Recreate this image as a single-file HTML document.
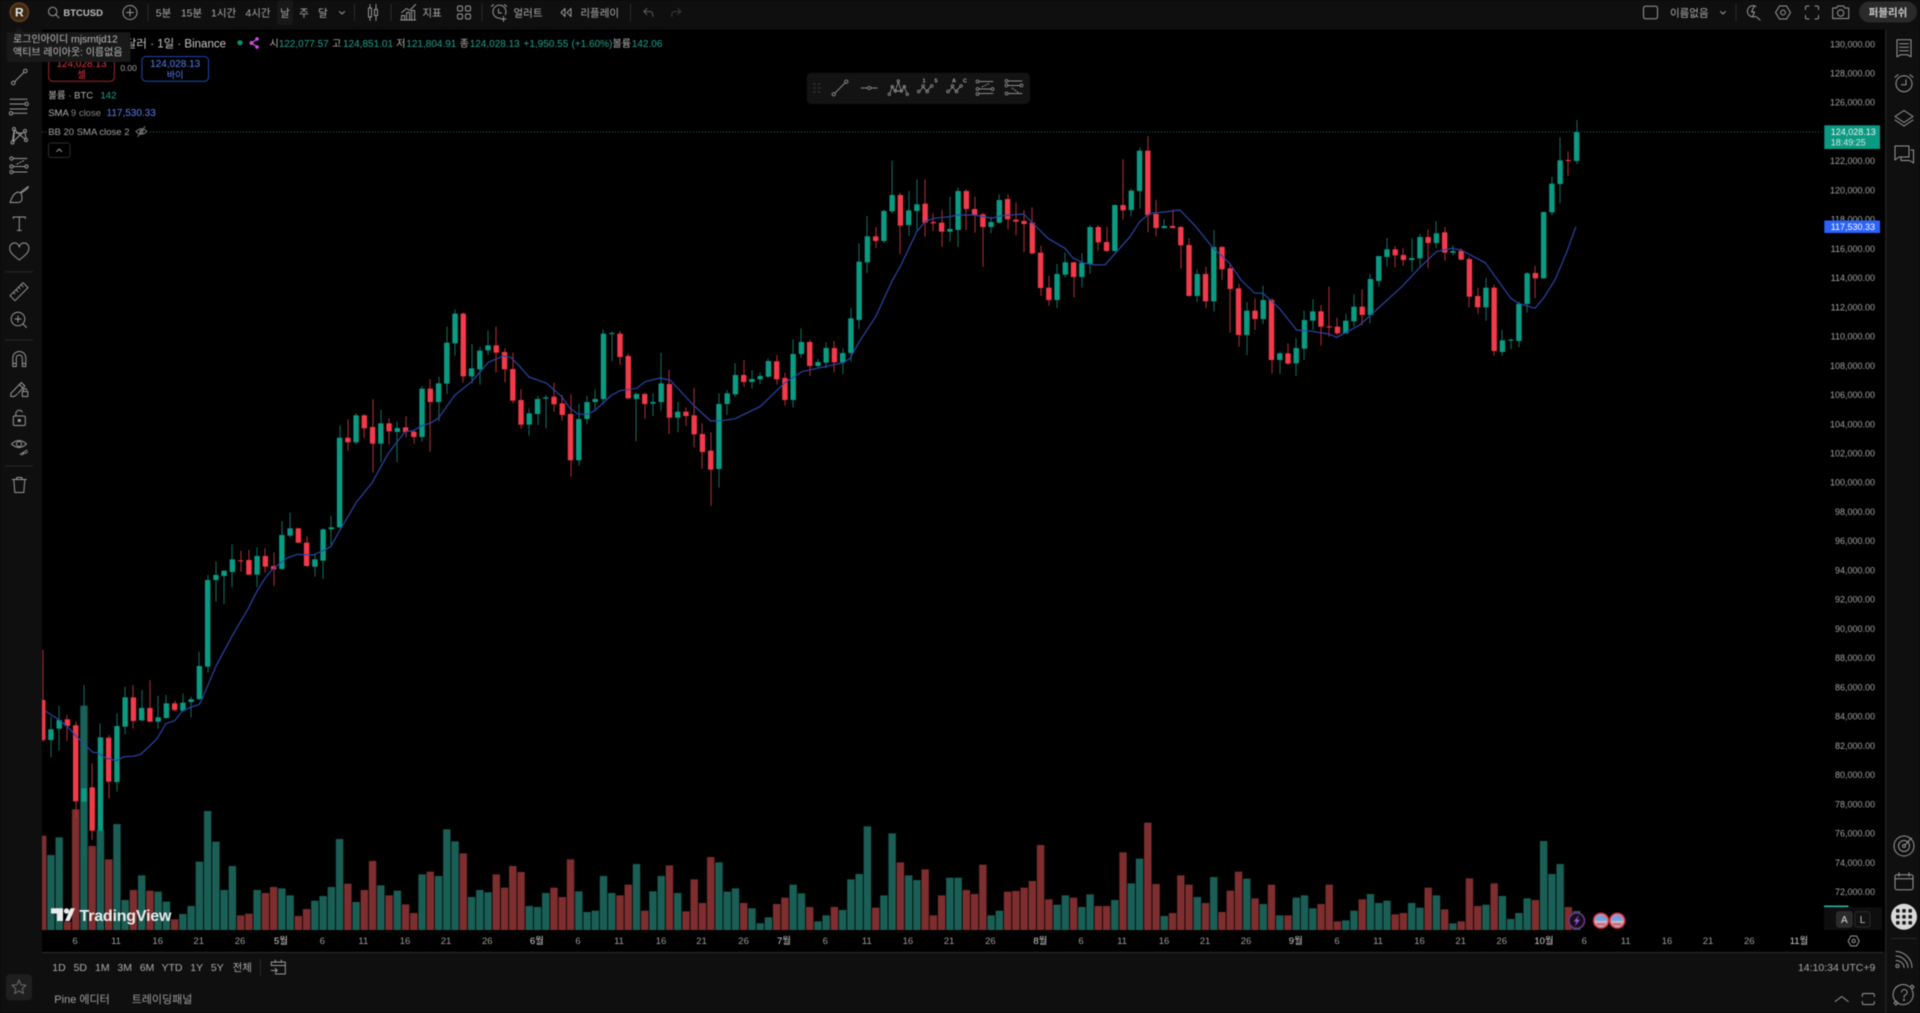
<!DOCTYPE html>
<html lang="ko"><head><meta charset="utf-8"><title>BTCUSD</title>
<style>
html,body{margin:0;padding:0;background:#000;width:1920px;height:1013px;overflow:hidden}
svg{display:block;filter:blur(.45px);font-family:"Liberation Sans","Noto Sans CJK KR",sans-serif}
.ic{fill:none;stroke:#989898;stroke-width:1;stroke-linecap:round;stroke-linejoin:round}
.tb{fill:none;stroke:#8c8c8c;stroke-width:.9;stroke-linecap:round;stroke-linejoin:round}
.t{fill:#ababab;font-size:10.5px}
.ax{fill:#a2a2a2;font-size:9px;text-anchor:end}
.tm{fill:#9c9c9c;font-size:9.5px;text-anchor:middle}
.mo{fill:#cfcfcf;font-size:9.5px;text-anchor:middle}
.mid{text-anchor:middle}
.lg{fill:#b4b4b4;font-size:10px}
.gv{fill:#1fa28d;font-size:10px}
</style></head><body>
<svg xmlns="http://www.w3.org/2000/svg" width="1920" height="1013" viewBox="0 0 1920 1013">
<rect width="1920" height="1013" fill="#000"/>
<g id="vol"></g><g id="can"></g>
<polyline id="sma" fill="none" stroke="#2b45a6" stroke-width="1.2" stroke-linejoin="round" points="45,710.7 59.3,720 66.7,726 78.3,738.3 87.3,747 92.7,752.3 97.3,752.7 106,758 116.7,760.7 124,756.7 133.3,756.3 140.7,754.3 150,745.7 157.3,738.3 166,723.3 174.7,720.7 182.3,711 190.7,707.3 199.3,704.3 202,699.3 215.7,666.7 231.7,636.7 248.3,608.3 256.7,591.7 265,578.3 273.3,568.3 286.7,558.3 296.7,554.3 313.3,555 323.3,550.7 330.7,546.7 340,530 356.7,501.7 371.7,483.3 388.3,453.3 405,431.7 413.3,430.7 421.7,425.7 430,423.3 438.3,418.3 455,395 471.7,381.7 488.3,362.3 503.3,356 510.7,357.3 520,366.7 529,377 546.7,383.3 561.7,396.7 570,408.3 578.3,414.3 586.7,414.3 594.3,411 611.7,395 620,390.7 636.7,388.3 645,381.7 660,378 670,380 694.3,406 710.7,421 721.7,420.7 735,418.7 760,406.7 785,382.7 801.7,371.7 843.3,362.7 850,358.3 859.3,341.7 875.7,316.7 891.7,281.7 901,265 916.7,231.7 925,221.7 933.3,218.3 950,216.7 957.3,215 975,215 991.7,218.3 1000,216 1023.7,214 1047.8,238.3 1065,248.3 1072.7,257.7 1082.3,262.7 1095.7,265 1105.2,264.7 1130,236.7 1139.7,221.7 1150,213.3 1164.5,212 1179.9,210 1195.9,226.7 1212.4,247.3 1229.6,263.3 1241,280 1254.5,293 1262.9,293.3 1279.3,308.3 1296.6,330 1311.9,331.3 1329,334 1336.7,337.3 1359.7,325 1401.8,286.7 1419,268.3 1436.2,251.7 1451.5,248.3 1461,250 1485.2,262.7 1510.8,298.3 1518.5,303.3 1535,308.3 1543.4,298.3 1554.9,280 1566.3,253.3 1575.9,226.7"/>
<line x1="42" y1="132" x2="1824" y2="132" stroke="#1c6d5e" stroke-width="1" stroke-dasharray="1 2"/>

<!-- frame -->
<rect x="0" y="0" width="1920" height="29.5" fill="#0f0f0f"/>
<rect x="0" y="0" width="42" height="1013" fill="#0f0f0f"/>
<rect x="1885" y="0" width="35" height="1013" fill="#0f0f0f"/>
<rect x="1885" y="29.5" width="1.6" height="984" fill="#1f1f1f"/>
<rect x="42" y="952" width="1843" height="61" fill="#0f0f0f"/>
<rect x="42" y="952" width="1841" height="1" fill="#2c2c2c"/>

<!-- top bar -->
<circle cx="19.3" cy="12.3" r="10" fill="#5d3a17"/>
<circle cx="19.3" cy="12.3" r="8" fill="#3c2813"/>
<text x="19.3" y="16.5" class="mid" fill="#e4e4e4" font-size="12" font-weight="bold">R</text>
<g class="ic" transform="translate(53.7,12.5)"><circle cx="-1" cy="-1" r="4.2"/><path d="M2 2L5.3 5.3"/></g>
<text x="63.4" y="16" fill="#bcbcbc" font-size="9.5" font-weight="bold">BTCUSD</text>
<g class="ic" transform="translate(130,12.5)"><circle r="7"/><path d="M0-3.5V3.5M-3.5 0H3.5"/></g>
<g fill="#2a2a2a"><rect x="147.5" y="4" width="1" height="17"/><rect x="354" y="4" width="1" height="17"/><rect x="390.5" y="4" width="1" height="17"/><rect x="481.5" y="4" width="1" height="17"/><rect x="630" y="4" width="1" height="17"/><rect x="1735.5" y="4" width="1" height="17"/></g>
<rect x="277" y="0" width="16" height="25" rx="3" fill="#181818"/>
<g class="t mid" style="font-size:10.5px">
<text x="163.5" y="16.5">5분</text><text x="191.5" y="16.5">15분</text><text x="223.6" y="16.5">1시간</text><text x="258" y="16.5">4시간</text><text x="285" y="16.5">날</text><text x="304" y="16.5">주</text><text x="323" y="16.5">달</text>
<text x="432" y="16.5">지표</text><text x="528" y="16.5">얼러트</text><text x="599.7" y="16.5">리플레이</text>
</g>
<g class="ic" transform="translate(342,12.5)"><path d="M-2.5-1L0 1.5L2.5-1"/></g>
<g class="ic" transform="translate(373,12.5)"><rect x="-4.5" y="-4.5" width="3" height="9"/><path d="M-3-8V-4.5M-3 4.5V8M3-8V-3M3 3V8"/><rect x="1.5" y="-3" width="3" height="6"/></g>
<g class="ic" transform="translate(408.6,12.5)"><path d="M-7 0L-2-4L1-2L7-8"/><path d="M-7 7V3H-4V7M-2 7V0H1V7M3 7V-2H6V7M-8 7.5H7"/></g>
<g class="ic" transform="translate(464,12.5)"><rect x="-6.5" y="-6.5" width="5" height="5" rx="1.5"/><rect x="1.5" y="-6.5" width="5" height="5" rx="1.5"/><rect x="-6.5" y="1.5" width="5" height="5" rx="1.5"/><rect x="1.5" y="1.5" width="5" height="5" rx="1.5"/></g>
<g class="ic" transform="translate(499.5,12.5)"><path d="M5.8 2A6.5 6.5 0 1 0 1 5.6"/><path d="M-1 -3.5V0.5H2M-6-8L-8-6M5-8L7-6M4 4V9M1.5 6.5H6.5"/></g>
<g class="ic" transform="translate(566,12.5)"><path d="M-1-4L-5 0L-1 4ZM5-4L1 0L5 4Z"/></g>
<g class="ic" transform="translate(647.8,12.5)" style="stroke:#5e5e5e"><path d="M-4-1H2A3 3 0 0 1 5 2V4M-4-1L-1-4M-4-1L-1 2"/></g>
<g class="ic" transform="translate(676.8,12.5)" style="stroke:#3c3c3c"><path d="M4-1H-2A3 3 0 0 0-5 2V4M4-1L1-4M4-1L1 2"/></g>

<rect x="1643.5" y="6.2" width="14" height="12.6" rx="2" fill="none" stroke="#989898" stroke-width="1"/>
<text x="1689.3" y="16.5" class="t mid" font-size="10.5">이름없음</text>
<g class="ic" transform="translate(1723,12.5)"><path d="M-2.5-1L0 1.5L2.5-1"/></g>
<g class="ic" transform="translate(1753,12.5)"><path d="M3-6A5.6 5.6 0 1 0 2 4"/><path d="M1-6L-1.5-0.5H1.5L-0.5 4M3 4L7 7.5"/></g>
<g class="ic" transform="translate(1783,12.5)"><path d="M-3.5-6.5H3.5L7.5 0L3.5 6.5H-3.5L-7.5 0Z"/><circle r="2.4"/></g>
<g class="ic" transform="translate(1812,12.5)"><path d="M-6.5-3V-5A1.5 1.5 0 0 1-5-6.5H-3M3-6.5H5A1.5 1.5 0 0 1 6.5-5V-3M6.5 3V5A1.5 1.5 0 0 1 5 6.5H3M-3 6.5H-5A1.5 1.5 0 0 1-6.5 5V3"/></g>
<g class="ic" transform="translate(1840.7,12.5)"><path d="M-8-4.5H-4L-3-6.5H3L4-4.5H8V6H-8Z"/><circle cy="0.5" r="3.2"/></g>
<rect x="1859" y="1.5" width="58" height="21" rx="10.5" fill="#2a2a2a"/>
<text x="1888" y="16.2" class="mid" fill="#c8c8c8" font-size="10.5" font-weight="bold">퍼블리쉬</text>

<!-- legend -->
<text x="226" y="47.5" text-anchor="end" fill="#c4c4c4" font-size="11.5">비트코인 / 미국 달러 · 1일 · Binance</text>
<circle cx="240" cy="42.7" r="2.6" fill="#0d8f78"/>
<g fill="none" stroke="#c050d8" stroke-width="1.3" transform="translate(254,43)"><path d="M3-4L-2.5 0L3 4"/><circle cx="3" cy="-4" r="1.2" fill="#c050d8"/><circle cx="3" cy="4" r="1.2" fill="#c050d8"/><circle cx="-2.5" cy="0" r="1.4" fill="#c050d8"/></g>
<text x="269.5" y="47" class="lg">시</text><text x="278.7" y="47" class="gv">122,077.57</text>
<text x="332" y="47" class="lg">고</text><text x="343" y="47" class="gv">124,851.01</text>
<text x="396.2" y="47" class="lg">저</text><text x="406.3" y="47" class="gv">121,804.91</text>
<text x="459.6" y="47" class="lg">종</text><text x="469.7" y="47" class="gv">124,028.13</text>
<text x="523.5" y="47" class="gv">+1,950.55</text><text x="571.5" y="47" class="gv">(+1.60%)</text>
<text x="612.5" y="47" class="lg">볼륨</text><text x="631.8" y="47" class="gv">142.06</text>

<rect x="48.7" y="50" width="65.6" height="31.2" rx="4" fill="#000" stroke="#9e2630"/>
<text x="81.5" y="66.8" class="mid" fill="#e23443" font-size="10">124,028.13</text>
<text x="81.5" y="78" class="mid" fill="#e23443" font-size="9.5">셀</text>
<text x="128.6" y="71" class="mid" fill="#a0a0a0" font-size="8.5">0.00</text>
<rect x="141.9" y="56.5" width="66.6" height="24.7" rx="4" fill="#000" stroke="#1f46ad"/>
<text x="175.2" y="66.8" class="mid" fill="#5580f0" font-size="10">124,028.13</text>
<text x="175.2" y="78" class="mid" fill="#5580f0" font-size="9">바이</text>

<text x="48.2" y="98.5" class="lg" style="font-size:9.5px">볼륨 · BTC</text><text x="100.5" y="98.5" class="gv" style="font-size:9.5px">142</text>
<text x="48.2" y="116" fill="#b0b0b0" font-size="9.5">SMA <tspan fill="#858585">9 close</tspan></text><text x="106.5" y="116" fill="#5580f0" font-size="10">117,530.33</text>
<rect x="46" y="124" width="102" height="15" fill="#000"/>
<text x="48.2" y="135" fill="#a0a0a0" font-size="9.5">BB 20 SMA close 2</text>
<g class="ic" transform="translate(141.4,131.5)" style="stroke:#7c7c7c"><path d="M-5.5 0Q0-5.5 5.5 0Q0 5.5-5.5 0ZM-3.5 5L3.5-5"/><circle r="1.6"/></g>
<rect x="48.5" y="143" width="21.5" height="14.5" rx="2.5" fill="#000" stroke="#2b2b2b"/>
<g class="ic" transform="translate(59.2,150.5)"><path d="M-2.5 1L0-1.5L2.5 1"/></g>

<!-- tooltip -->
<rect x="7" y="32.3" width="123.5" height="29.7" rx="2" fill="#191919"/>
<path d="M14 32.5L19 27.5L24 32.5Z" fill="#191919"/>
<text x="13" y="42.5" fill="#bcbcbc" font-size="10">로그인아이디 rnjsrntjd12</text>
<text x="13" y="55.5" fill="#bcbcbc" font-size="10">액티브 레이아웃: 이름없음</text>

<!-- left toolbar -->
<g class="ic" transform="translate(19.3,77)"><path d="M-4.5 4.5L4.5-4.5"/><circle cx="-6" cy="6" r="1.8"/><circle cx="6" cy="-6" r="1.8"/></g>
<g class="ic" transform="translate(19,106.5)"><path d="M-9-7.2H8M-9-2.5H6M-9 2.5H8M-6.5 6.8H8"/><circle cx="7.7" cy="-2.5" r="1.7"/><circle cx="-8" cy="6.8" r="1.7"/></g>
<g class="ic" transform="translate(19,136)"><path d="M-5-5.5L-6.5 5M6-3.5L7 2.5M-4-6L1-1M5-4L1-1M-5.5 5.5L1-1M6 3L1-1M-4.5-5L-5.5 5M4-3H-3"/><circle cx="-5" cy="-7" r="1.5"/><circle cx="6" cy="-5" r="1.5"/><circle cx="-6.5" cy="6.5" r="1.5"/><circle cx="7" cy="4" r="1.5"/></g>
<g class="ic" transform="translate(19,165)"><path d="M-6-6.5H8M-6 1.5H6M-6 7H8"/><path d="M-2-1L6-5" stroke-dasharray="1.5 1.5"/><circle cx="-7.5" cy="-6.5" r="1.6"/><circle cx="-7.5" cy="1.5" r="1.6"/><circle cx="7.5" cy="1.5" r="1.6"/><circle cx="-7.5" cy="7" r="1.6"/></g>
<g class="ic" transform="translate(19,195)"><path d="M-9 7.5H-1C3 7.5 4 4 2-2L-1-3C-5-2-7 2-9 7.5ZM2-3L9-8.5"/><path d="M2.5-2C4-4 7-4 9.5-8"/></g>
<g class="ic" transform="translate(19.3,223.5)"><path d="M-6-6.5H6M-6-6.5V-5M6-6.5V-5M0-6.5V7M-2 7H2"/></g>
<g class="ic" transform="translate(19.3,252)"><path d="M0 8C-5 4-9.5 1-9.5-3.5A4.8 4.8 0 0 1 0-5A4.8 4.8 0 0 1 9.5-3.5C9.5 1 5 4 0 8Z"/></g>
<rect x="5" y="271.3" width="28" height=".9" fill="#2b2b2b"/>
<rect x="5" y="339.6" width="28" height=".9" fill="#2b2b2b"/>
<rect x="5" y="465.6" width="28" height=".9" fill="#2b2b2b"/>
<g class="ic" transform="translate(19,291.7)"><path d="M-9 4L4-9L9-4L-4 9ZM-5.5 0.5L-4 2M-3 -2L-1 0M-0.5-4.5L1-3M2-7L4-5"/></g>
<g class="ic" transform="translate(19,320)"><circle cx="-1" cy="-1" r="6.8"/><path d="M-1-4V2M-4-1H2M4 4L7.5 7.5"/></g>
<g class="ic" transform="translate(19.3,359)"><path d="M-6.5 7.5V-1A6.5 6.5 0 0 1 6.5-1V7.5H3V-1A3 3 0 0 0-3-1V7.5ZM-6.5 4.5H-3M3 4.5H6.5"/></g>
<g class="ic" transform="translate(19.3,388)"><path d="M-8.5 5.5L2-5.5L5.5-2L-1 5M-8.5 5.5V8.5H-5L-2 6M0-3.5L3.5 0"/><rect x="3" y="3.5" width="5.5" height="5"/><path d="M4 3.5V2A1.8 1.8 0 0 1 7.5 2"/></g>
<g class="ic" transform="translate(19.3,418)"><rect x="-6" y="-2" width="12" height="9.5" rx="1.5"/><path d="M-3.5-2V-4.5A3.5 3.5 0 0 1 3-6"/><rect x="-1" y="1.5" width="2" height="2" fill="#989898"/></g>
<g class="ic" transform="translate(19,446)"><path d="M-7.5-2Q0-9 7.5-2Q0 5-7.5-2Z"/><circle cy="-2" r="2.5"/><path d="M1 8.5L8 4M3 9L5 7M6 7.5L8.5 6"/></g>
<g class="ic" transform="translate(19.3,485)"><path d="M-7-5.5H7M-3-5.5L-2.5-7.5H2.5L3-5.5M-5.5-5.5L-4.5 7.5H4.5L5.5-5.5"/></g>
<rect x="6" y="974.3" width="26" height="26" rx="4" fill="#1f1f1f"/>
<path transform="translate(19,987)" fill="none" stroke="#6e6e6e" stroke-width="1" stroke-linejoin="round" d="M0-7L2-2.2L7-1.8L3.2 1.6L4.4 6.5L0 3.8L-4.4 6.5L-3.2 1.6L-7-1.8L-2-2.2Z"/>

<!-- right toolbar -->
<g class="ic" transform="translate(1904,48.3)"><path d="M-7-8.5H7V8.5L3.5 6.5H-3.5L-7 8.5ZM-4.5-4.5H4.5M-4.5-1H4.5M-4.5 2.5H4.5"/></g>
<g class="ic" transform="translate(1904,82.7)"><circle cy="1" r="8"/><path d="M2-3V2H-2.5M-9-5.5L-6-8M9-5.5L6-8"/></g>
<g class="ic" transform="translate(1904,118)"><path d="M0-7.5L9-1.5L0 4.5L-9-1.5ZM-9 2L0 8L9 2"/></g>
<g class="ic" transform="translate(1904,154)"><path d="M-9-8H5V3H-5L-9 6ZM7-4H9.5V9L5.5 6.5H-3V4"/></g>
<g class="ic" transform="translate(1904,846)"><circle r="10"/><circle r="5.5"/><circle r="1.5"/><path d="M1 -1L7.5-8"/></g>
<g class="ic" transform="translate(1904,881.7)"><rect x="-9" y="-7" width="18" height="15" rx="2"/><path d="M-9-3H9M-5-9V-5.5M5-9V-5.5"/></g>
<circle cx="1904" cy="916.7" r="13" fill="#d9d9d9"/>
<g fill="#1a1a1a"><rect x="1896" y="909" width="3.6" height="3.6" rx="1"/><rect x="1902.2" y="909" width="3.6" height="3.6" rx="1"/><rect x="1908.4" y="909" width="3.6" height="3.6" rx="1"/><rect x="1896" y="915" width="3.6" height="3.6" rx="1"/><rect x="1902.2" y="915" width="3.6" height="3.6" rx="1"/><rect x="1908.4" y="915" width="3.6" height="3.6" rx="1"/><rect x="1896" y="921" width="3.6" height="3.6" rx="1"/><rect x="1902.2" y="921" width="3.6" height="3.6" rx="1"/><rect x="1908.4" y="921" width="3.6" height="3.6" rx="1"/></g>
<rect x="1891" y="938" width="26" height=".9" fill="#2b2b2b"/>
<g class="ic" transform="translate(1904,959.5)"><path d="M-8-8C0-8 8-1 8 8M-8-3.5C-2-3.5 4 2 4 8M-8 1C-4 1 0 4 0 8"/><circle cx="-6.5" cy="6.5" r="1.6"/></g>
<g class="ic" transform="translate(1904,995)"><path d="M8-5A10 10 0 1 1 5-8.5"/><path d="M-2.5-3A2.8 2.8 0 1 1 1 0C0 .6 0 1.2 0 2.5"/><circle cy="5" r=".5"/><path d="M8-10L10-8L8-6L6-8ZM-8 6L-6 8L-8 10L-10 8Z"/></g>

<!-- floating drawing toolbar -->
<rect x="806.7" y="72.7" width="223.3" height="31.3" rx="5" fill="#131313"/>
<g fill="#3c3c3c"><circle cx="814.5" cy="84" r=".9"/><circle cx="819" cy="84" r=".9"/><circle cx="814.5" cy="88" r=".9"/><circle cx="819" cy="88" r=".9"/><circle cx="814.5" cy="92" r=".9"/><circle cx="819" cy="92" r=".9"/></g>
<g class="tb" transform="translate(840,88)"><path d="M-5 5L5-5"/><circle cx="-6.3" cy="6.3" r="1.6"/><circle cx="6.3" cy="-6.3" r="1.6"/></g>
<g class="tb" transform="translate(869.3,88)"><path d="M-8 0H-1.7M1.7 0H8"/><circle r="1.6"/></g>
<g class="tb" transform="translate(898.3,88)"><path d="M-8.5 5L-6-1L-3 3L0-6L3 3L6-1L8.5 5M-2 3H2"/><circle cx="-9" cy="6.3" r="1.2"/><circle cx="-6" cy="-1.3" r="1.2"/><circle cx="-3" cy="3" r="1.2"/><circle cy="-7" r="1.2"/><circle cx="3" cy="3" r="1.2"/><circle cx="6" cy="-1.3" r="1.2"/><circle cx="9" cy="6.3" r="1.2"/></g>
<g class="tb" transform="translate(926.7,88)"><path d="M-7 3L-3.5-1L0 3L4-1"/><circle cx="-8" cy="3.5" r="1.3"/><circle cx="-3.5" cy="-2" r="1.3"/><circle cx="0.5" cy="3.5" r="1.3"/><circle cx="5" cy="-2" r="1.3"/></g>
<g class="tb" transform="translate(956,88)"><path d="M-7 3L-3.5-1L0 3L4-1"/><circle cx="-8" cy="3.5" r="1.3"/><circle cx="-3.5" cy="-2" r="1.3"/><circle cx="0.5" cy="3.5" r="1.3"/><circle cx="5" cy="-2" r="1.3"/></g>
<g fill="#a8a8a8" font-size="5.5" font-weight="bold" class="mid"><text x="924" y="82.5">1</text><text x="936" y="82.5">5</text><text x="954" y="82.5">A</text><text x="965" y="82.5">C</text></g>
<g class="tb" transform="translate(985,88)"><path d="M-6-6.5H8M-6 1H6M-6 5.5H8"/><path d="M-3-1L5-5" stroke-dasharray="1.5 1.5"/><circle cx="-7.5" cy="-6.5" r="1.4"/><circle cx="-7.5" cy="1" r="1.4"/><circle cx="7.5" cy="1" r="1.4"/><circle cx="-7.5" cy="6" r="1.4"/></g>
<g class="tb" transform="translate(1014,88)"><path d="M-6-7H8M-6-2.5H6M-6 5.5H8"/><path d="M-2 0L5 5" stroke-dasharray="1.5 1.5"/><circle cx="-7.5" cy="-7" r="1.4"/><circle cx="-7.5" cy="-2.5" r="1.4"/><circle cx="7.5" cy="-2.5" r="1.4"/><circle cx="-7.5" cy="5.5" r="1.4"/></g>

<!-- price axis -->
<g class="ax">
<text x="1875" y="47.3">130,000.00</text><text x="1875" y="76.5">128,000.00</text><text x="1875" y="105.7">126,000.00</text><text x="1875" y="164.2">122,000.00</text><text x="1875" y="193.4">120,000.00</text><text x="1875" y="222.6">118,000.00</text><text x="1875" y="251.9">116,000.00</text><text x="1875" y="281.1">114,000.00</text><text x="1875" y="310.3">112,000.00</text><text x="1875" y="339.6">110,000.00</text><text x="1875" y="368.8">108,000.00</text><text x="1875" y="398">106,000.00</text><text x="1875" y="427.3">104,000.00</text><text x="1875" y="456.5">102,000.00</text><text x="1875" y="485.7">100,000.00</text><text x="1875" y="515">98,000.00</text><text x="1875" y="544.2">96,000.00</text><text x="1875" y="573.4">94,000.00</text><text x="1875" y="602.7">92,000.00</text><text x="1875" y="631.9">90,000.00</text><text x="1875" y="661.1">88,000.00</text><text x="1875" y="690.4">86,000.00</text><text x="1875" y="719.6">84,000.00</text><text x="1875" y="748.8">82,000.00</text><text x="1875" y="778.1">80,000.00</text><text x="1875" y="807.3">78,000.00</text><text x="1875" y="836.5">76,000.00</text><text x="1875" y="865.8">74,000.00</text><text x="1875" y="895">72,000.00</text>
</g>
<rect x="1824.3" y="125.3" width="55.7" height="23.7" fill="#0a9981"/>
<text x="1830.7" y="135" fill="#f4f4f4" font-size="9">124,028.13</text>
<text x="1830.7" y="145.7" fill="#d8e8e4" font-size="9">18:49:25</text>
<rect x="1824.3" y="220.5" width="55.7" height="12.5" fill="#2962ff"/>
<text x="1830.7" y="230" fill="#fff" font-size="9">117,530.33</text>

<!-- A L -->
<rect x="1824" y="907.3" width="58" height="22.7" fill="#0e0e0e"/>
<rect x="1824" y="905.5" width="24.5" height="1.6" fill="#2fb5a0"/>
<rect x="1836.7" y="911.7" width="15.3" height="15.3" rx="2.5" fill="#2a2a2a" stroke="#333"/>
<rect x="1855" y="911.7" width="15" height="15.3" rx="2.5" fill="#111" stroke="#2a2a2a"/>
<text x="1844.3" y="923" class="mid" fill="#d8d8d8" font-size="10">A</text>
<text x="1862.5" y="923" class="mid" fill="#c4c4c4" font-size="10">L</text>

<!-- markers -->
<circle cx="1576.7" cy="920.7" r="7.8" fill="#14101a" stroke="#6d3a8c" stroke-width="1.5"/>
<path d="M1579 914.8L1573.8 921.6H1576.6L1574.6 926.5L1580 919.6H1577Z" fill="#a64fe0"/>
<g stroke="#d8303e" stroke-width="1.6"><circle cx="1601" cy="920.7" r="7.4" fill="#c9b8c4"/><circle cx="1617.3" cy="920.7" r="7.4" fill="#c9b8c4"/></g>
<g fill="#6fa4e4"><path d="M1595 920.7A6 6 0 0 1 1607 920.7Z"/><path d="M1611.3 920.7A6 6 0 0 1 1623.3 920.7Z"/></g>
<g fill="#cf6f80"><path d="M1595.5 923H1606.5L1604.5 925.8H1597.5Z"/><path d="M1611.8 923H1622.8L1620.8 925.8H1613.8Z"/><rect x="1601" y="916.5" width="5.5" height="1"/><rect x="1617.3" y="916.5" width="5.5" height="1"/></g>

<!-- TradingView logo -->
<g fill="#ececec"><path d="M51 908.3H63V921H57V913.5H51Z"/><circle cx="66.5" cy="911" r="2.7"/><path d="M65 921L70.5 908.3H75L69.5 921Z"/></g>
<text x="79.5" y="921" fill="#ececec" font-size="16" font-weight="bold" letter-spacing="-.2">TradingView</text>

<!-- time axis -->
<g class="tm">
<text x="75" y="944">6</text><text x="116" y="944">11</text><text x="157.7" y="944">16</text><text x="198.7" y="944">21</text><text x="240" y="944">26</text><text x="322.3" y="944">6</text><text x="363.3" y="944">11</text><text x="405" y="944">16</text><text x="446" y="944">21</text><text x="487.3" y="944">26</text><text x="578" y="944">6</text><text x="619" y="944">11</text><text x="661" y="944">16</text><text x="701.6" y="944">21</text><text x="743.6" y="944">26</text><text x="825.3" y="944">6</text><text x="866.8" y="944">11</text><text x="907.9" y="944">16</text><text x="949" y="944">21</text><text x="990.4" y="944">26</text><text x="1081" y="944">6</text><text x="1122" y="944">11</text><text x="1164" y="944">16</text><text x="1205" y="944">21</text><text x="1246" y="944">26</text><text x="1337" y="944">6</text><text x="1378" y="944">11</text><text x="1419.5" y="944">16</text><text x="1460.7" y="944">21</text><text x="1501.7" y="944">26</text><text x="1584.3" y="944">6</text><text x="1625.7" y="944">11</text><text x="1667" y="944">16</text><text x="1708" y="944">21</text><text x="1749.3" y="944">26</text>
</g>
<g class="mo">
<text x="281" y="944">5월</text><text x="536.9" y="944">6월</text><text x="784" y="944">7월</text><text x="1040.4" y="944">8월</text><text x="1295.8" y="944">9월</text><text x="1544" y="944">10월</text><text x="1799" y="944">11월</text>
</g>
<g class="ic" transform="translate(1853.7,941)"><path d="M-2.8-5H2.8L5.6 0L2.8 5H-2.8L-5.6 0Z"/><circle r="1.7"/></g>

<!-- bottom -->
<g class="t mid" style="font-size:10.5px">
<text x="59" y="971">1D</text><text x="80.3" y="971">5D</text><text x="102.3" y="971">1M</text><text x="124.7" y="971">3M</text><text x="147" y="971">6M</text><text x="172" y="971">YTD</text><text x="196.7" y="971">1Y</text><text x="217.3" y="971">5Y</text><text x="242.3" y="971">전체</text>
</g>
<rect x="260" y="959" width="1" height="17" fill="#2a2a2a"/>
<g class="ic" transform="translate(278.3,967.5)"><path d="M-7-2V-5.5H7V6.5H-3M-7-2H7M-3-7.5V-5M3-7.5V-5M-7 3H-1M-3 1L-1 3L-3 5"/></g>
<text x="54.3" y="1003" fill="#a0a0a0" font-size="11">Pine 에디터</text>
<text x="131.7" y="1003" fill="#a0a0a0" font-size="11">트레이딩패널</text>
<text x="1875.3" y="971" text-anchor="end" fill="#a8a8a8" font-size="10.5">14:10:34 UTC+9</text>
<g class="ic" transform="translate(1841.7,999)"><path d="M-6.5 2.5L0-2.5L6.5 2.5"/></g>
<g class="ic" transform="translate(1868.3,999)"><path d="M-6-2.5V-4A1.5 1.5 0 0 1-4.5-5.5H4.5A1.5 1.5 0 0 1 6-4V-2.5M-6 2.5V4A1.5 1.5 0 0 0-4.5 5.5H4.5A1.5 1.5 0 0 0 6 4V2.5"/></g>
</svg>
<script>
(function(){
var NS="http://www.w3.org/2000/svg";
var segs=[
[640,"R180,300,30,305 G268,300,230,352 G240,266,198,332 R238,258,225,303 R256,484,245,535 G445,485,135,650 R442,572,370,600 G292,572,250,640 R293,425,285,475 G258,426,220,455 G172,260,140,283 R172,243,135,265 G204,241,150,243 R204,245,120,246 G232,245,167,266 G190,234,165,236 R190,210,182,215 G188,212,160,216 G178,186,170,232"],
[300,"G1098,1197,1055,1200 G840,1100,825,1118 G825,840,785,905 G812,828,812,912 G778,816,733,862 R781,783,752,815 R780,824,750,825 G768,824,742,862 R768,800,745,818 R798,808,757,858 G705,807,663,808 G685,707,638,712 R685,728,683,730 R728,798,708,800 G778,800,760,830 G688,782,685,837 G682,688,647,735 G413,682,376,685 R413,427,358,452 G346,427,340,432 R346,385,342,415 R381,431,298,518 G370,431,330,486 R370,394,355,433 G384,396,365,486 R382,396,349,412 R395,411,390,431 G266,411,258,425 R266,306,238,455 G250,306,230,364 G128,251,80,282 G41,130,28,167 R41,229,37,248 G205,229,132,250 G152,208,140,254 G136,151,92,165 R136,158,80,218 R156,208,145,247 R207,302,158,310 R300,374,268,386 G340,374,325,407 G297,342,288,375"],
[120,"G832,836,825,925 R830,853,788,875 R850,885,825,902 R882,1021,823,1070 G897,1021,852,1037 G846,897,828,913 G837,846,808,868 G641,837,628,853 G639,642,635,723 R641,711,633,735 R708,835,700,838 G822,837,818,964 R822,852,818,897 G846,851,820,888 G790,846,698,872 R792,893,750,942 G875,893,845,937 R875,888,862,918 R886,943,804,982 R942,996,910,1046 R992,1049,937,1158 G852,1047,820,1103 G820,852,810,885 G765,823,730,830 R765,786,720,800 G777,786,750,806 G768,778,757,792 G723,770,716,773 R724,778,705,794 R774,840,758,857 G702,840,658,863 G666,702,625,714 R666,738,659,767 G726,738,717,742 G684,728,667,745 R684,727,663,757 G699,727,685,762 G595,699,565,725 G425,600,370,627 G349,427,288,459 R349,363,321,384 G273,363,268,370 G225,274,122,280 R225,317,218,402 G271,315,213,348 G253,273,178,330 R251,308,178,350 R306,310,280,333 R308,335,270,380 G327,335,230,365 G213,330,203,381 R213,267,208,330 R267,285,230,338 R283,321,278,440 G306,321,290,340 G240,308,223,310"],
[110,"R267,328,253,357 R329,335,277,376 R333,342,300,427 R338,430,292,434 R428,534,407,558 R533,570,497,587 G492,570,462,594 G457,494,428,502 R457,501,455,562 G459,501,430,533 G351,463,345,491 R351,397,345,422 R396,423,350,425 G285,423,283,425 R285,301,148,329 G242,300,236,319 G122,243,113,296 R122,315,78,367 R312,354,270,379 G348,354,327,356 R348,354,298,356 R351,406,348,476 R405,558,385,560 G492,558,478,576 R492,574,470,595 G411,574,360,605 R411,478,408,510 R475,537,465,668 R535,675,522,710 G602,675,576,735 R602,627,565,660 G570,627,527,642 R570,750,565,790 G730,750,724,792 R730,761,700,764 G714,760,685,798 G630,716,602,750 G604,632,568,660 R604,650,585,707 R649,652,530,680 R650,670,623,675 G632,670,612,672 G590,634,553,650 R590,615,538,645 G507,615,492,640 G438,513,438,530 G418,441,384,470 R418,436,408,472 R435,450,415,467 G444,450,385,486 G381,445,372,470 R381,399,358,473 G370,399,333,414 R367,428,351,452 G423,428,406,436 R423,449,415,451 R447,560,440,592 R558,592,533,612 G533,592,503,632 R533,723,524,737 G691,726,660,737 G689,691,686,717 G582,693,576,712 G490,582,486,608 R489,505,468,564 G306,505,305,506 G221,307,200,316 G151,222,82,280 R150,152,124,197 G66,153,30,163"]
];
var vols=[107,165,112,365,28,-283,138,90,178,72,300,270,226,272,275,305,358,342,318,185,33,125,270,198,346,341,270,279,261,265,286,348,327,302,288,261,117,251,306,270,183,256,286,272,313,339,223,215,228,88,124,160,291,270,277,223,263,198,216,318,321,279,263,291,178,274,336,332,228,279,286,254,192,332,274,228,196,279,334,238,309,171,187,275,265,309,325,370,352,312,293,254,280,321,364,346,321,330,238,222,79,323,286,100,187,226,240,208,346,286,233,233,270,282,194,346,332,275,273,263,243,135,298,314,286,293,321,283,318,318,300,157,250,176,68,252,348,339,226,254,291,309,231,336,272,215,236,295,312,254,346,346,293,286,325,312,254,364,361,332,298,282,309,302,343,339,309,323,263,286,328,370,364,235,318,314,250,288,357,339,295,300,123,222,192,321,333];
var vg=document.getElementById('vol'),cg=document.getElementById('can');
function el(p,tag,o){var e=document.createElementNS(NS,tag);for(var k in o)e.setAttribute(k,o[k]);p.appendChild(e);}
var i=0,colors=[];
segs.forEach(function(s){var base=s[0];s[1].split(' ').forEach(function(t){
  var g=t[0]=='G',n=t.slice(1).split(',').map(function(v){return base+(+v)/3;});
  var x=42.7+8.247*i;colors[i]=g;
  var bl=Math.max(x-2.7,42);
  el(cg,'rect',{x:Math.round(x)-.5,y:n[2],width:1,height:n[3]-n[2],fill:g?'#0c6f5e':'#b32c3b'});
  el(cg,'rect',{x:bl,y:n[0],width:x+2.7-bl,height:Math.max(n[1]-n[0],1),fill:g?'#0a9b83':'#f23a4a'});
  i++;
});});
for(var j=0;j<vols.length;j++){
  var x=42.7+8.247*j,y=800+vols[j]/3,l=Math.max(x-3.7,42);
  el(vg,'rect',{x:l,y:y,width:x+3.7-l,height:930-y,fill:colors[j]?'#1a5f56':'#7e2e2e'});
}
})();
</script>
</body></html>
